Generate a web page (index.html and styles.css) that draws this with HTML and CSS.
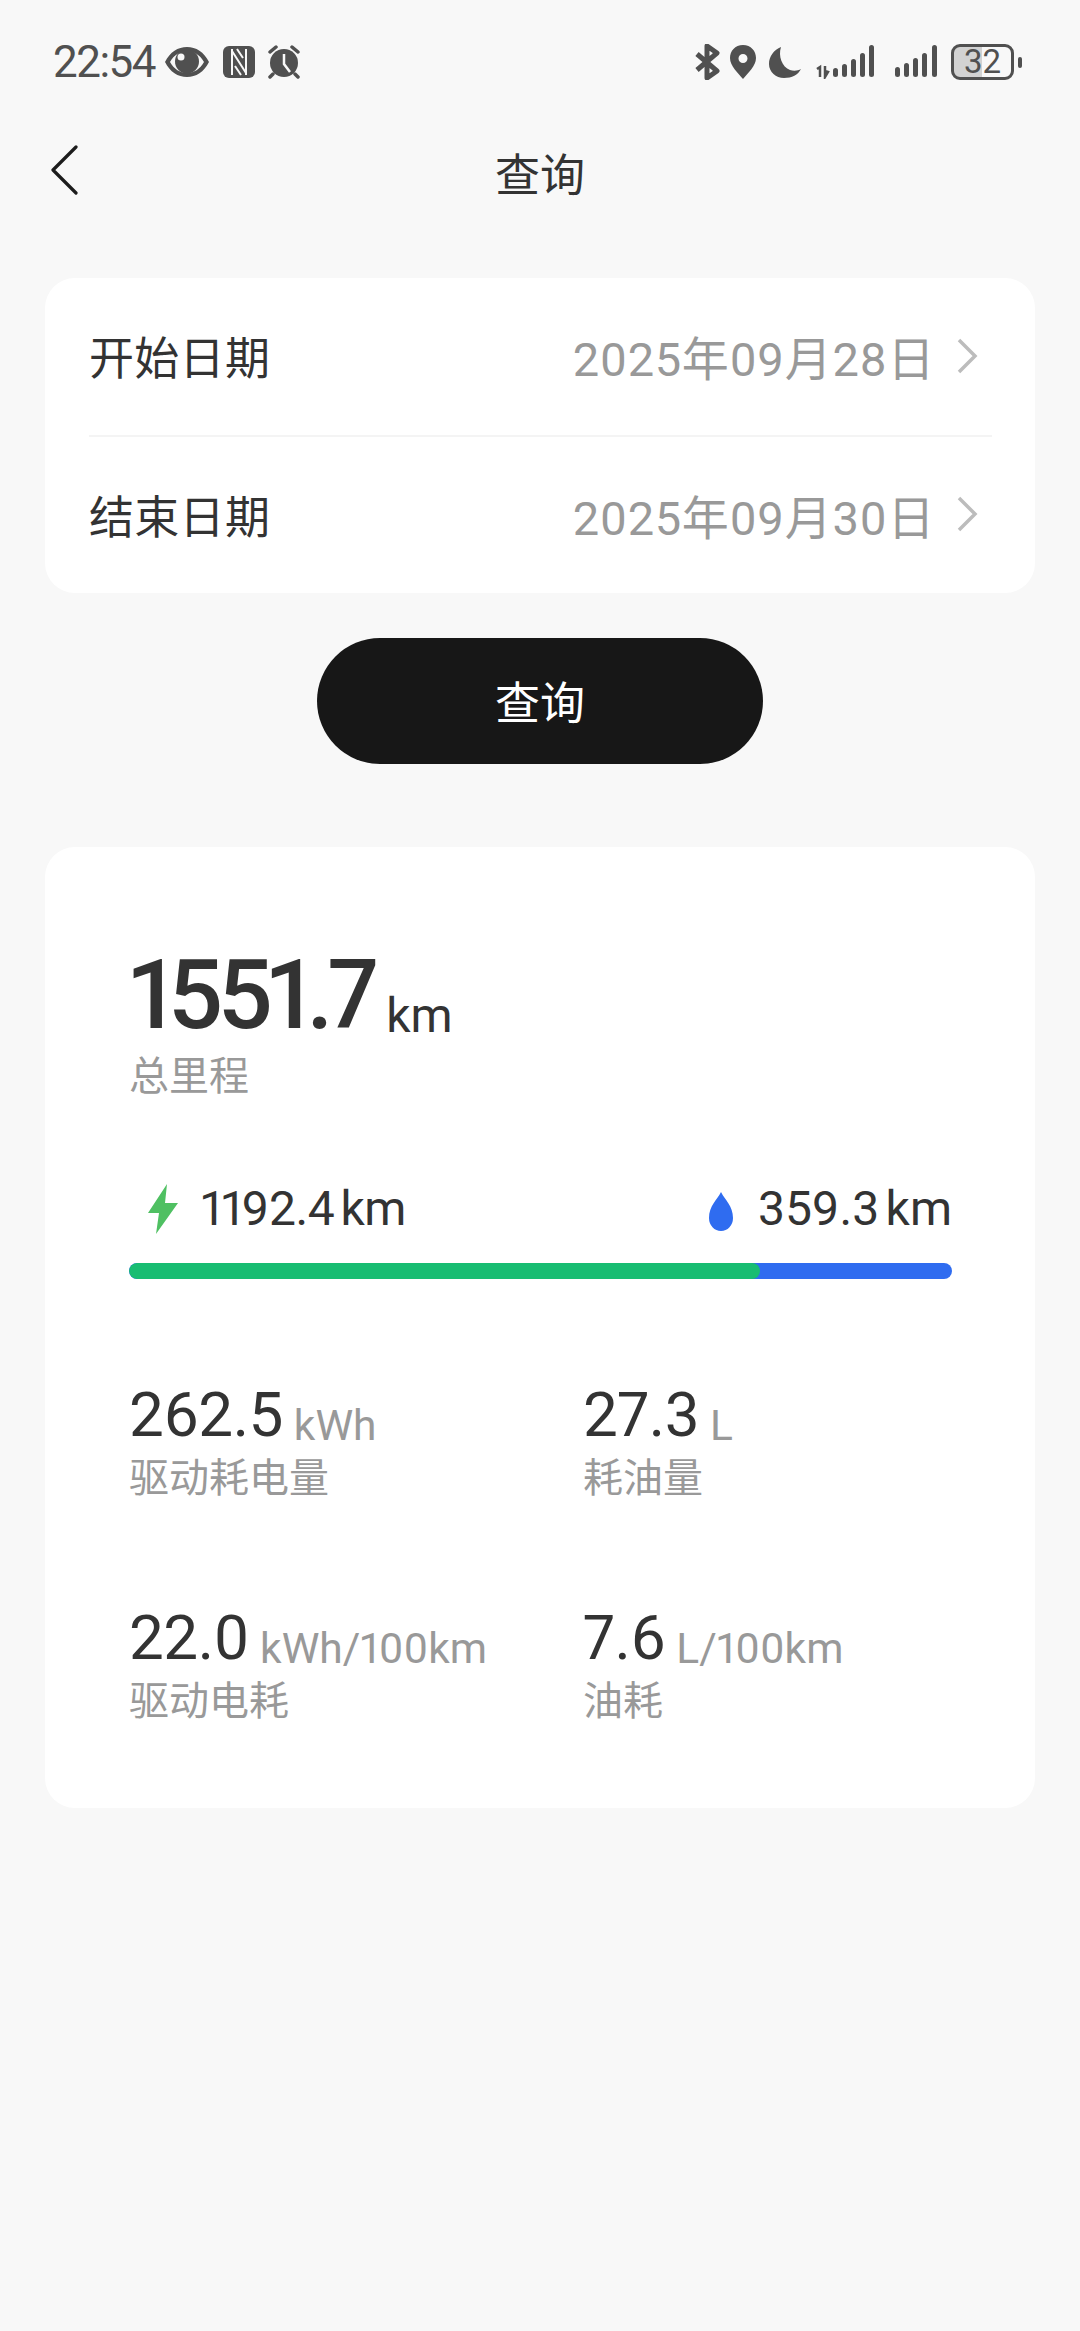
FILE: index.html
```html
<!DOCTYPE html>
<html lang="zh">
<head>
<meta charset="utf-8">
<title>查询</title>
<link rel="stylesheet" href="styles.css">
</head>
<body>
<div class="status">
  <div class="status-left">
    <span class="time">22:54</span>
    <svg class="ic eye" width="46" height="32" viewBox="0 0 46 32"><path fill-rule="evenodd" d="M1 16C6 6 14 1 23 1s17 5 22 15c-5 10-13 15-22 15S6 26 1 16zm5 0c4 7 10 11 17 11s13-4 17-11C36 9 30 5 23 5S10 9 6 16z"/><circle cx="23" cy="15.500" r="12"/><circle cx="17" cy="11" r="3.500" fill="#f8f8f8"/></svg>
    <svg class="ic nfc" width="32" height="32" viewBox="0 0 32 32"><rect x="0" y="0" width="32" height="32" rx="6"/><path d="M9 3v26M23 3v26M9 5l14 22M14 3l6 9M12 20l6 9" fill="none" stroke="#f8f8f8" stroke-width="2"/></svg>
    <svg class="ic alarm" width="36" height="34" viewBox="0 0 36 34"><circle cx="18" cy="18" r="14"/><path d="M18 9v10l6 8" fill="none" stroke="#f8f8f8" stroke-width="2.500"/><path d="M4 7l6-5M32 7l-6-5M7 29l-3 3M29 29l3 3" fill="none" stroke="#505050" stroke-width="3.500" stroke-linecap="round"/></svg>
  </div>
  <div class="status-right">
    <svg class="ic bt" width="26" height="36" viewBox="0 0 26 36"><path d="M3 10l20 17-10 7V2l10 7L3 26" fill="none" stroke="#505050" stroke-width="5" stroke-linejoin="round"/><path d="M16.500 8.500l1.500 1-1.500 1.500zM16.500 25l1.500 1.500-1.500 1z" fill="#f8f8f8"/></svg>
    <svg class="ic pin" width="28" height="36" viewBox="0 0 28 36"><path fill-rule="evenodd" d="M14 1C6 1 1 7 1 14c0 8 8 15 13 21 5-6 13-13 13-21C27 7 22 1 14 1zm0 9a4.500 4.500 0 1 1 0 9 4.500 4.500 0 0 1 0-9z"/></svg>
    <svg class="ic moon" width="32" height="33" viewBox="0 0 32 33"><path d="M12 1C5 4 0 10 0 18c0 8 7 14 15 14 8 0 14-3 17-9-3 2-8 2-11 1C13 21 9 10 12 1z"/></svg>
    <svg class="ic sig1" width="60" height="34" viewBox="0 0 60 34"><path d="M2 24l3-2v10M10 21v11l3-5-3-1" fill="none" stroke="#505050" stroke-width="2.500"/><rect x="18" y="23" width="5" height="9" rx="2.500"/><rect x="27" y="19" width="5" height="13" rx="2.500"/><rect x="36" y="14" width="5" height="18" rx="2.500"/><rect x="45" y="8" width="5" height="24" rx="2.500"/><rect x="54" y="0" width="5" height="32" rx="2.500"/></svg>
    <svg class="ic sig2" width="43" height="34" viewBox="0 0 43 34"><rect x="0" y="22" width="5" height="10" rx="2.500"/><rect x="9" y="18" width="5" height="14" rx="2.500"/><rect x="18" y="13" width="5" height="19" rx="2.500"/><rect x="27" y="8" width="5" height="24" rx="2.500"/><rect x="37" y="0" width="5" height="32" rx="2.500"/></svg>
    <div class="battery"><div class="batt-body"><span class="batt-num">32</span></div><div class="batt-tip"></div></div>
  </div>
</div>

<header class="nav">
  <svg class="back" width="30" height="50" viewBox="0 0 30 50"><path d="M26 2L3 25l23 23" fill="none" stroke="#1c1c1c" stroke-width="3.200" stroke-linecap="round" stroke-linejoin="round"/></svg>
  <h1 class="title">查询</h1>
</header>

<section class="card dates">
  <div class="row">
    <span class="row-label">开始日期</span>
    <span class="row-value">2025年09月28日</span>
    <svg class="chev" width="22" height="36" viewBox="0 0 22 36"><path d="M3 2l16 16L3 34" fill="none" stroke="#bcbcbc" stroke-width="3.500"/></svg>
  </div>
  <div class="row">
    <span class="row-label">结束日期</span>
    <span class="row-value">2025年09月30日</span>
    <svg class="chev" width="22" height="36" viewBox="0 0 22 36"><path d="M3 2l16 16L3 34" fill="none" stroke="#bcbcbc" stroke-width="3.500"/></svg>
  </div>
</section>

<div class="btn-wrap"><button class="query">查询</button></div>

<section class="card result">
  <div class="total"><span class="total-num">1551.7</span><span class="total-unit">km</span></div>
  <div class="caption total-cap">总里程</div>

  <div class="split">
    <div class="split-item">
      <svg class="bolt" width="32" height="50" viewBox="0 0 32 50"><path d="M20 0L1 29h11L9 50l22-31H18z" fill="#4fc062"/></svg>
      <span class="split-val">1192.4<span class="thin"> </span>km</span>
    </div>
    <div class="split-item">
      <svg class="drop" width="26" height="40" viewBox="0 0 26 40"><path d="M13 0c4 8 12 14 12 26a12 13 0 0 1-24 0C1 14 9 8 13 0z" fill="#2f6cf0"/></svg>
      <span class="split-val fuel">359.3<span class="thin"> </span>km</span>
    </div>
  </div>
  <div class="bar"><div class="bar-fill"></div></div>

  <div class="stats">
    <div class="stat"><div class="stat-line"><span class="stat-num">262.5</span><span class="stat-unit">kWh</span></div><div class="caption">驱动耗电量</div></div>
    <div class="stat"><div class="stat-line"><span class="stat-num">27.3</span><span class="stat-unit">L</span></div><div class="caption">耗油量</div></div>
    <div class="stat"><div class="stat-line"><span class="stat-num">22.0</span><span class="stat-unit">kWh/100km</span></div><div class="caption">驱动电耗</div></div>
    <div class="stat"><div class="stat-line"><span class="stat-num">7.6</span><span class="stat-unit">L/100km</span></div><div class="caption">油耗</div></div>
  </div>
</section>
</body>
</html>
```

FILE: styles.css
```css
* { box-sizing: border-box; }
html, body { margin: 0; padding: 0; }
body {
  width: 1080px;
  height: 2331px;
  background: #f8f8f8;
  font-family: Roboto, "Noto Sans CJK SC", sans-serif;
  font-feature-settings: "pnum";
  font-variant-numeric: proportional-nums;
  color: #333;
  overflow: hidden;
}
.status {
  height: 84px;
  padding: 43px 58px 0 53px;
  display: flex;
  justify-content: space-between;
  align-items: flex-start;
}
.status-left, .status-right { display: flex; align-items: center; height: 38px; }
.time { font-size: 44px; line-height: 38px; color: #505050; width: 111px; letter-spacing: -1.500px; }
.ic { fill: #505050; display: block; flex: none; }
.nfc { margin-left: 13px; }
.alarm { margin-left: 11px; }
.bt { margin-right: 9px; }
.pin { margin-right: 12px; }
.moon { margin-right: 14px; }
.sig1 { margin-right: 20px; }
.sig2 { margin-right: 13px; }
.battery { display: flex; align-items: center; gap: 4px; }
.batt-body {
  width: 63px;
  height: 36px;
  border: 3px solid #505050;
  border-radius: 9px;
  background: linear-gradient(90deg, #d2d2d2 50%, #f8f8f8 50%);
  display: flex;
  align-items: center;
  justify-content: center;
}
.batt-num { font-size: 33px; line-height: 30px; color: #505050; }
.batt-tip { width: 4px; height: 11px; border-radius: 2px; background: #505050; }

.nav {
  height: 194px;
  position: relative;
  display: flex;
  justify-content: center;
  padding-top: 68px;
}
.back { position: absolute; left: 50px; top: 61px; }
.title { margin: 0; font-size: 45px; line-height: 50px; font-weight: 400; color: #333; }

.card { background: #fff; border-radius: 30px; margin: 0 45px; }
.dates { height: 315px; padding: 0 43px 0 44px; }
.row {
  height: 157px;
  display: flex;
  align-items: center;
  font-size: 45px;
  padding-bottom: 2px;
}
.row + .row { height: 158px; border-top: 2px solid #f4f4f4; }
.row-label { color: #333; flex: 1; letter-spacing: .3px; }
.row-value { color: #999; font-size: 47px; letter-spacing: .6px; }
.chev { margin-left: 21px; margin-right: 14px; }

.btn-wrap { display: flex; justify-content: center; padding-top: 45px; height: 254px; }
.query {
  width: 446px;
  height: 126px;
  border: 0;
  border-radius: 63px;
  background: #171717;
  color: #fff;
  font: inherit;
  font-size: 45px;
  padding: 0 0 2px;
}

.result { height: 961px; padding: 105px 83px 0 84px; }
.total { height: 86px; line-height: 86px; white-space: nowrap; }
.total-num { font-size: 97px; font-weight: 500; letter-spacing: -5.500px; color: #333; }
.total-unit { font-size: 48px; margin-left: 13px; color: #333; vertical-align: -4px; }
.caption { font-size: 40px; line-height: 46px; color: #999; }
.total-cap { margin-top: 16px; }

.split {
  display: flex;
  justify-content: space-between;
  margin-top: 81px;
  padding-left: 18px;
  height: 62px;
}
.split-item { display: flex; align-items: center; }
.split-val { font-size: 48px; line-height: 62px; color: #333; letter-spacing: -.4px; }
.split-val.fuel { letter-spacing: 0; }
.thin { font-size: 26px; }
.bolt { margin-right: 22px; margin-bottom: 6px; }
.drop { margin-right: 24px; }
.bar {
  height: 16px;
  margin-top: 20px;
  width: 823px;
  border-radius: 8px;
  background: #2f6cf0;
  overflow: hidden;
}
.bar-fill { width: 631px; height: 100%; border-radius: 8px; background: #18bd72; }

.stats {
  display: grid;
  grid-template-columns: 454px 1fr;
  grid-auto-rows: 223px;
  margin-top: 105px;
}
.stat-line { height: 62px; line-height: 62px; margin-bottom: 10px; white-space: nowrap; }
.stat-num { font-size: 62px; color: #333; letter-spacing: -.5px; }
.stat-unit { font-size: 42.500px; color: #999; margin-left: 11px; vertical-align: -4px; }
```
